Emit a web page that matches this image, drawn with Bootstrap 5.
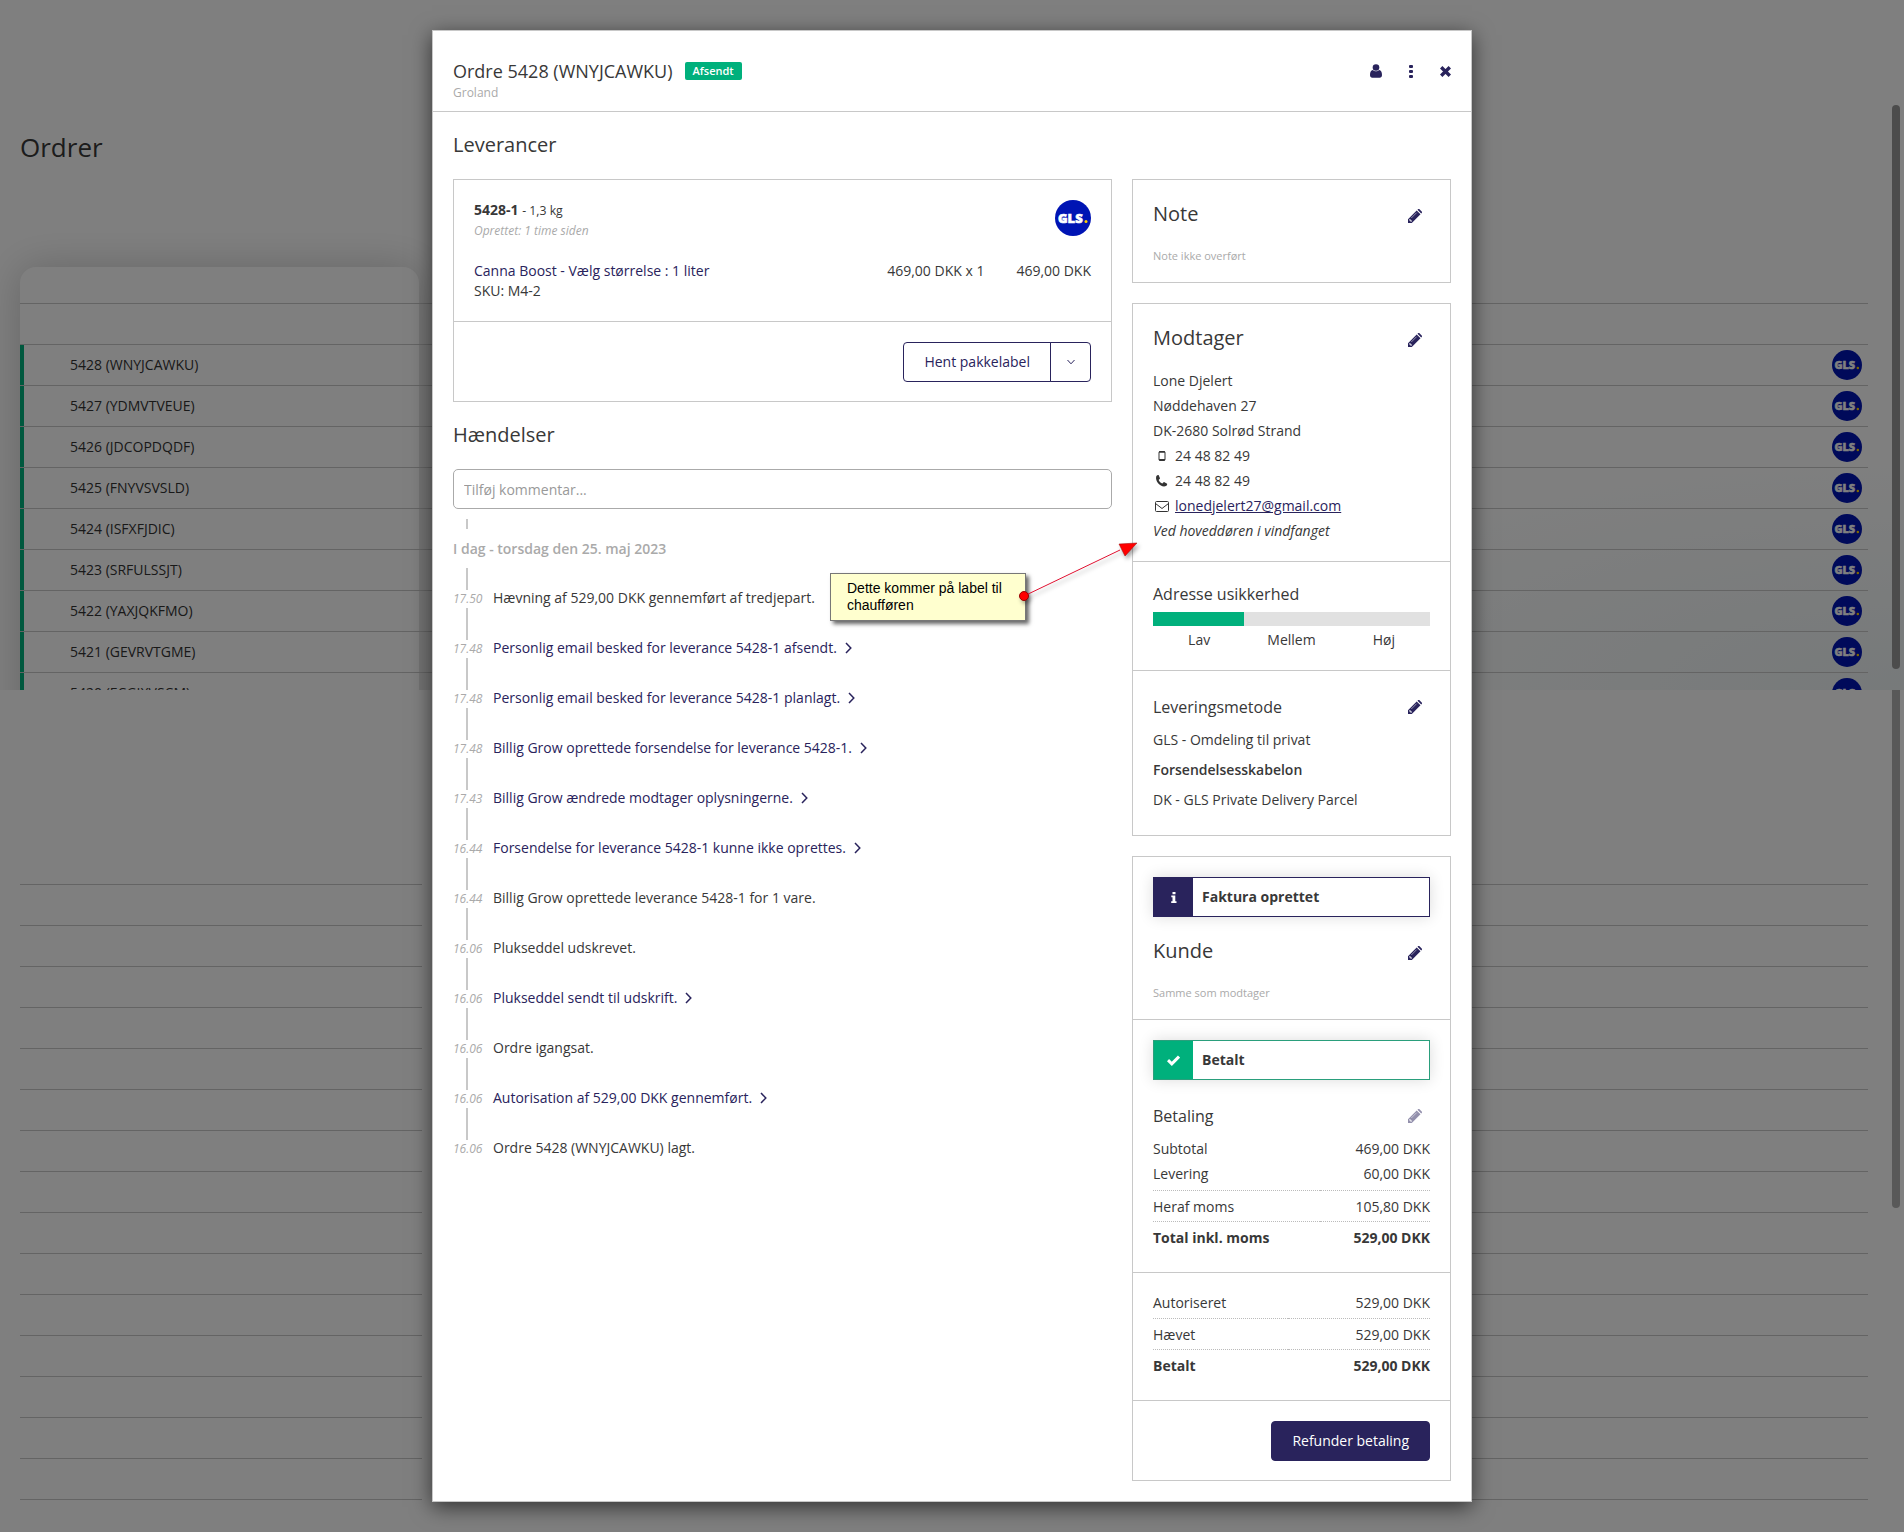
<!DOCTYPE html>
<html lang="da">
<head>
<meta charset="utf-8">
<meta name="viewport" content="width=device-width, initial-scale=1">
<title>Ordrer</title>
<link href="https://cdn.jsdelivr.net/npm/bootstrap@5.3.0/dist/css/bootstrap.min.css" rel="stylesheet">
<style>
:root{--ink:#383838;--navy:#29235c;--green:#00b07c;--line:#c8c8c8;--mute:#aaa}
body{font-family:"Open Sans",sans-serif;font-size:14px;line-height:20px;color:var(--ink);background:#fff}
h1,h2,h3{font-weight:400;margin:0;color:var(--ink)}
a{color:var(--navy)}
svg{display:block;flex:none}
.page-wrap{position:relative;min-height:1532px}
/* page behind the dialog */
.top-pane{height:690px;overflow:hidden;padding:0 36px 0 20px;background:radial-gradient(ellipse 700px 240px at 100% 100%,#eef4f5,#fff)}
.page-title{font-size:26px;line-height:40px;padding-top:127px;margin-bottom:100px}
.orders{position:relative}
.orders::before{content:"";position:absolute;left:0;top:0;width:399px;height:700px;border-radius:16px;background:#fff;box-shadow:0 0 40px rgba(0,0,0,.2)}
.orders-body{position:relative}
.blank-row{height:41px;border-bottom:1px solid #c8c8c8}
.blank-row.first{height:37px}
.order-row{height:41px;border-bottom:1px solid #c8c8c8;padding:0 6px 0 50px;box-shadow:inset 4px 0 var(--green)}
.order-row a{color:#333;font-size:14px}
.low-pane{padding:154px 36px 0 20px;gap:40px}
.low-col-a{width:402px}
.scroll-thumb{position:absolute;right:4px;width:8px;border-radius:4px;background:#999}
.thumb-a{top:105px;height:564px}
.thumb-b{top:690px;height:518px;background:#b2b2b2;border-radius:0 0 4px 4px}
.shade{position:absolute;inset:0;background:rgba(0,0,0,.5)}
/* dialog */
.order-modal{position:absolute;display:block;height:auto;min-height:100%;z-index:20;overflow:visible}
.order-modal .modal-dialog{max-width:1040px;margin:30px auto}
.order-modal .modal-content{border:1px solid #c8c8c8;border-radius:0;color:var(--ink);box-shadow:0 5px 20px rgba(0,0,0,.6)}
.dlg-head{padding:28px 18px 8px 20px;border-bottom:1px solid var(--line);min-height:81px}
.dlg-head h2{font-size:18px;line-height:24px}
.state-tag{background:var(--green);color:#fff;font-size:11px;line-height:18px;padding:0 8px;border-radius:2px;font-weight:600}
.shop{font-size:12px;line-height:20px;color:var(--mute)}
.ico-btn{background:none;border:0;padding:0;width:35px;height:24px;display:flex;align-items:center;justify-content:center;color:var(--navy)}
.side-col .ico-btn{width:30px}
.head-tools{margin-right:-10px}
.dlg-body{padding:19px 20px 20px}
.sec-title{font-size:20px;line-height:28px}
.events-title{padding:19px 0 20px}
.main-grid{gap:20px}
.side-col{width:319px;flex:none}
.box{border:1px solid var(--line)}
.box>section{padding:20px}
.box>section+section{border-top:1px solid var(--line)}
.box>.box-note{padding-bottom:16px}
.box-note .box-top{margin-bottom:18px}
.box>.box-addr{padding-bottom:18px}
.box>.box-foot{padding-bottom:19px}
.box>.box-paid{padding-top:17px}
.sub-it{font-size:12px;font-style:italic;color:var(--mute)}
.split .btn{border:1px solid var(--navy);color:var(--navy);font-size:14px;line-height:20px;padding:9px 20px;border-radius:4px}
.split .btn:last-child{padding:9px 0;width:41px;display:flex;align-items:center;justify-content:center}
.comment-in{height:40px;border:1px solid #aaa;border-radius:5px;font-size:14px;padding:0 10px;color:var(--ink)}
.comment-in::placeholder{color:#999}
.tl{padding-top:10px}
.tl::before{content:"";display:block;width:2px;height:10px;margin-left:13px;background:var(--line)}
.tl-date{font-weight:600;color:var(--mute);line-height:20px;padding:10px 0 9px}
.tl-list{margin:0;padding:0;list-style:none}
.tl-list li{display:flex;align-items:flex-end;height:50px}
.tl-list li:first-child{height:40px}
.tl-time{width:40px;height:100%;font-size:12px;line-height:18px;font-style:italic;color:var(--mute);display:flex;flex-direction:column}
.tl-time::before{content:"";flex:1;width:2px;margin-left:13px;background:var(--line)}
.tl-list a,.item-link{text-decoration:none}
.tl-list a{display:inline-flex;align-items:center;gap:8px}
.tag-ico{width:22px}
.addr{line-height:25px}
.mini{font-size:11px;line-height:20px;color:var(--mute)}
.sub-title{font-size:16px;line-height:24px}
.meter-title{margin-bottom:6px}
.meter{height:14px;border-radius:0;background:#e1e1e1}
.meter .progress-bar{background:var(--green)}
.method{line-height:30px;padding-top:6px}
.note-bar{height:40px;border:1px solid var(--navy);font-weight:700;box-shadow:0 0 15px rgba(0,0,0,.14)}
.note-bar span{width:39px;height:100%;background:var(--navy);color:#fff;display:flex;align-items:center;justify-content:center;margin-right:9px}
.note-bar.paid{border-color:#2a9f7c}
.note-bar.paid span{background:var(--green)}
.sums{width:100%;border-collapse:separate;border-spacing:0}
.sums th,.sums td{padding:0;line-height:25px;font-weight:400}
.sums td{text-align:right}
.sums .pre-dots th,.sums .pre-dots td{padding-bottom:4px}
.box-paid .sums .pre-dots th,.box-paid .sums .pre-dots td{padding-bottom:3px}
.sums .dots th,.sums .dots td{border-top:1px dotted #bbb;padding:3px 0 2px}
.sums .sum-b th,.sums .sum-b td{font-weight:700}
.refund{background:var(--navy);border-color:var(--navy);color:#fff;font-size:14px;line-height:20px;padding:9px 20px;border-radius:4px}
.refund:hover{background:#1c1844;color:#fff}
/* annotation */
.callout{position:absolute;left:397px;top:542px;width:196px;height:48px;background:#ffffcf;border:1px solid #777;box-shadow:3px 3px 4px rgba(0,0,0,.6);padding:6px 16px;font:14px/17px "Liberation Sans",Arial,sans-serif;color:#000}
.arrow{position:absolute;left:583px;top:500px;filter:drop-shadow(2px 3px 2px rgba(0,0,0,.35))}
</style>
</head>
<body>
<svg width="0" height="0" class="position-absolute">
<defs>
<symbol id="gls" viewBox="0 0 36 36"><circle cx="18" cy="18" r="18" fill="#0014b4"/><text x="3" y="23" font-family="Open Sans,sans-serif" font-weight="800" font-size="13" fill="#fff" stroke="#fff" stroke-width=".6">GLS</text><circle cx="31" cy="21.500" r="1.500" fill="#ffd100"/></symbol>
<symbol id="pen" viewBox="0 0 14 14"><path fill="currentColor" d="M0 14v-3.800L8.700 1.500l3.800 3.800L3.800 14zM9.500.7l.5-.4c.5-.4 1.100-.4 1.500 0l2.200 2.200c.4.400.4 1 0 1.500l-.5.500z"/><path fill="#fff" d="M1.200 10.700l.7-.7 2.100 2.100-.7.700H2.500v-1.200H1.200z"/><path stroke="#fff" stroke-width=".5" d="M3.300 9L8.600 3.700"/></symbol>
<symbol id="chev" viewBox="0 0 7 12"><path fill="none" stroke="currentColor" stroke-width="1.500" d="M1 1l4.800 5L1 11"/></symbol>
</defs>
</svg>
<div class="page-wrap">
<main>
<div class="top-pane">
<h1 class="page-title">Ordrer</h1>
<div class="orders"><div class="orders-body">
<div class="blank-row first"></div><div class="blank-row"></div>
<div class="order-row d-flex align-items-center justify-content-between"><a class="text-decoration-none" href="#">5428 (WNYJCAWKU)</a><svg width="30" height="30"><use href="#gls"/></svg></div>
<div class="order-row d-flex align-items-center justify-content-between"><a class="text-decoration-none" href="#">5427 (YDMVTVEUE)</a><svg width="30" height="30"><use href="#gls"/></svg></div>
<div class="order-row d-flex align-items-center justify-content-between"><a class="text-decoration-none" href="#">5426 (JDCOPDQDF)</a><svg width="30" height="30"><use href="#gls"/></svg></div>
<div class="order-row d-flex align-items-center justify-content-between"><a class="text-decoration-none" href="#">5425 (FNYVSVSLD)</a><svg width="30" height="30"><use href="#gls"/></svg></div>
<div class="order-row d-flex align-items-center justify-content-between"><a class="text-decoration-none" href="#">5424 (ISFXFJDIC)</a><svg width="30" height="30"><use href="#gls"/></svg></div>
<div class="order-row d-flex align-items-center justify-content-between"><a class="text-decoration-none" href="#">5423 (SRFULSSJT)</a><svg width="30" height="30"><use href="#gls"/></svg></div>
<div class="order-row d-flex align-items-center justify-content-between"><a class="text-decoration-none" href="#">5422 (YAXJQKFMO)</a><svg width="30" height="30"><use href="#gls"/></svg></div>
<div class="order-row d-flex align-items-center justify-content-between"><a class="text-decoration-none" href="#">5421 (GEVRVTGME)</a><svg width="30" height="30"><use href="#gls"/></svg></div>
<div class="order-row d-flex align-items-center justify-content-between"><a class="text-decoration-none" href="#">5420 (ECGIXVSCM)</a><svg width="30" height="30"><use href="#gls"/></svg></div>
</div></div>
</div>
<div class="low-pane d-flex">
<div class="low-col-a"><div class="blank-row"></div><div class="blank-row"></div><div class="blank-row"></div><div class="blank-row"></div><div class="blank-row"></div><div class="blank-row"></div><div class="blank-row"></div><div class="blank-row"></div><div class="blank-row"></div><div class="blank-row"></div><div class="blank-row"></div><div class="blank-row"></div><div class="blank-row"></div><div class="blank-row"></div><div class="blank-row"></div><div class="blank-row"></div></div>
<div class="flex-grow-1"><div class="blank-row"></div><div class="blank-row"></div><div class="blank-row"></div><div class="blank-row"></div><div class="blank-row"></div><div class="blank-row"></div><div class="blank-row"></div><div class="blank-row"></div><div class="blank-row"></div><div class="blank-row"></div><div class="blank-row"></div><div class="blank-row"></div><div class="blank-row"></div><div class="blank-row"></div><div class="blank-row"></div><div class="blank-row"></div></div>
</div>
</main>
<div class="scroll-thumb thumb-a"></div>
<div class="scroll-thumb thumb-b"></div>
<div class="shade"></div>

<div class="modal order-modal" role="dialog" aria-labelledby="dlgTitle">
<div class="modal-dialog">
<div class="modal-content">
<header class="dlg-head d-flex justify-content-between">
<div>
<div class="d-flex align-items-center gap-2"><h2 id="dlgTitle">Ordre 5428 (WNYJCAWKU)</h2><span class="state-tag ms-1">Afsendt</span></div>
<div class="shop">Groland</div>
</div>
<div class="head-tools d-flex">
<button class="ico-btn" type="button" aria-label="Kunde"><svg width="12" height="14" viewBox="0 0 12 14" fill="currentColor"><circle cx="6" cy="3.500" r="3.300"/><path d="M2.800 6C4.500 7.800 7.500 7.800 9.200 6 11 6.200 12 8 12 11c0 1.800-1 2.700-2.300 2.700H2.300C1 13.700 0 12.800 0 11 0 8 1 6.200 2.800 6z"/></svg></button>
<button class="ico-btn" type="button" aria-label="Mere"><svg width="4" height="14" viewBox="0 0 4 14" fill="currentColor"><rect y="1" width="4" height="3" rx="1"/><rect y="6" width="4" height="3" rx="1"/><rect y="11" width="4" height="3" rx="1"/></svg></button>
<button class="ico-btn" type="button" aria-label="Luk"><svg width="11" height="11" viewBox="0 0 11 11"><path stroke="currentColor" stroke-width="3.400" d="M1.200 1.200l8.600 8.600M9.800 1.200L1.200 9.800"/></svg></button>
</div>
</header>
<div class="dlg-body">
<h2 class="sec-title mb-3 pb-1">Leverancer</h2>
<div class="main-grid d-flex">
<div class="flex-grow-1">
<div class="box">
<section>
<div class="d-flex justify-content-between">
<div><div><b class="fw-bold">5428-1</b> <small class="fw-normal">- 1,3 kg</small></div><div class="sub-it">Oprettet: 1 time siden</div></div>
<svg width="36" height="36" role="img" aria-label="GLS"><use href="#gls"/></svg>
</div>
<div class="d-flex pt-3 mt-1">
<div class="flex-grow-1"><a class="item-link" href="#">Canna Boost - Vælg størrelse : 1 liter</a><div>SKU: M4-2</div></div>
<div class="me-3 pe-3">469,00 DKK x 1</div><div>469,00 DKK</div>
</div>
</section>
<section class="box-foot d-flex justify-content-end">
<div class="btn-group split"><button class="btn" type="button">Hent pakkelabel</button><button class="btn" type="button" aria-label="Flere valg"><svg width="8" height="6" viewBox="0 0 8 6"><path fill="none" stroke="currentColor" d="M.5 1L4 4.800 7.500 1"/></svg></button></div>
</section>
</div>
<h2 class="sec-title events-title"><label class="d-block" for="kommentar">Hændelser</label></h2>
<input class="form-control comment-in" id="kommentar" type="text" placeholder="Tilføj kommentar...">
<div class="tl">
<div class="tl-date">I dag - torsdag den 25. maj 2023</div>
<ul class="tl-list">
<li><span class="tl-time">17.50</span><span>Hævning af 529,00 DKK gennemført af tredjepart.</span></li>
<li><span class="tl-time">17.48</span><a href="#">Personlig email besked for leverance 5428-1 afsendt. <svg width="7" height="12"><use href="#chev"/></svg></a></li>
<li><span class="tl-time">17.48</span><a href="#">Personlig email besked for leverance 5428-1 planlagt. <svg width="7" height="12"><use href="#chev"/></svg></a></li>
<li><span class="tl-time">17.48</span><a href="#">Billig Grow oprettede forsendelse for leverance 5428-1. <svg width="7" height="12"><use href="#chev"/></svg></a></li>
<li><span class="tl-time">17.43</span><a href="#">Billig Grow ændrede modtager oplysningerne. <svg width="7" height="12"><use href="#chev"/></svg></a></li>
<li><span class="tl-time">16.44</span><a href="#">Forsendelse for leverance 5428-1 kunne ikke oprettes. <svg width="7" height="12"><use href="#chev"/></svg></a></li>
<li><span class="tl-time">16.44</span><span>Billig Grow oprettede leverance 5428-1 for 1 vare.</span></li>
<li><span class="tl-time">16.06</span><span>Plukseddel udskrevet.</span></li>
<li><span class="tl-time">16.06</span><a href="#">Plukseddel sendt til udskrift. <svg width="7" height="12"><use href="#chev"/></svg></a></li>
<li><span class="tl-time">16.06</span><span>Ordre igangsat.</span></li>
<li><span class="tl-time">16.06</span><a href="#">Autorisation af 529,00 DKK gennemført. <svg width="7" height="12"><use href="#chev"/></svg></a></li>
<li><span class="tl-time">16.06</span><span>Ordre 5428 (WNYJCAWKU) lagt.</span></li>
</ul>
</div>
</div>
<aside class="side-col d-flex flex-column main-grid">
<div class="box"><section class="box-note">
<div class="box-top d-flex justify-content-between"><h2 class="sec-title">Note</h2><button class="ico-btn mt-1" type="button" aria-label="Rediger note"><svg width="14" height="14"><use href="#pen"/></svg></button></div>
<div class="mini">Note ikke overført</div>
</section></div>
<div class="box">
<section class="box-addr">
<div class="d-flex justify-content-between mb-3"><h2 class="sec-title">Modtager</h2><button class="ico-btn mt-1" type="button" aria-label="Rediger modtager"><svg width="14" height="14"><use href="#pen"/></svg></button></div>
<div class="addr">
<div>Lone Djelert</div><div>Nøddehaven 27</div><div>DK-2680 Solrød Strand</div>
<div class="d-flex align-items-center"><span class="tag-ico"><svg width="18" height="14" viewBox="0 0 18 14"><rect x="6" y="2.500" width="6" height="9" rx="1" fill="none" stroke="#333"/><path stroke="#333" stroke-width="1.500" d="M6 3h6M6 10.800h6"/></svg></span>24 48 82 49</div>
<div class="d-flex align-items-center"><span class="tag-ico"><svg width="18" height="14" viewBox="0 0 18 14"><path fill="#333" d="M3.200 2.500C3.700 1.300 5 .8 5.600 1.100L7 4.200c0 .8-1.100 1.100-1.300 1.700.7 1.600 2.100 2.900 3.700 3.500.7-.2 1.100-1.400 1.700-1.300l3 1.600c.4.700-.4 2-1.200 2.400C8.300 14 1.900 7.800 3.200 2.500z"/></svg></span>24 48 82 49</div>
<div class="d-flex align-items-center"><span class="tag-ico"><svg width="18" height="14" viewBox="0 0 18 14"><rect x="2.500" y="2.500" width="13" height="10" rx="1" fill="none" stroke="#333"/><path fill="none" stroke="#333" d="M2.500 4.500L9 9.500l6.500-5"/></svg></span><a href="#">lonedjelert27@gmail.com</a></div>
<div class="fst-italic">Ved hoveddøren i vindfanget</div>
</div>
</section>
<section>
<h3 class="sub-title meter-title">Adresse usikkerhed</h3>
<div class="progress meter mb-1" role="progressbar" aria-label="Adresse usikkerhed" aria-valuenow="33" aria-valuemin="0" aria-valuemax="100"><div class="progress-bar" style="width:33%"></div></div>
<div class="d-flex text-center"><div class="col-4">Lav</div><div class="col-4">Mellem</div><div class="col-4">Høj</div></div>
</section>
<section>
<div class="d-flex justify-content-between"><h3 class="sub-title pt-1">Leveringsmetode</h3><button class="ico-btn mt-1" type="button" aria-label="Rediger leveringsmetode"><svg width="14" height="14"><use href="#pen"/></svg></button></div>
<div class="method"><div>GLS - Omdeling til privat</div><div class="fw-semibold">Forsendelsesskabelon</div><div>DK - GLS Private Delivery Parcel</div></div>
</section>
</div>
<div class="box">
<section class="box-note">
<div class="note-bar d-flex align-items-center mb-3"><span><svg width="6" height="11" viewBox="0 0 6 11" fill="currentColor"><path d="M1.500 0h3v2.300h-3zM.3 3.500h4v5.700h1.200V11H.2V9.200h1.300V5.300H.3z"/></svg></span>Faktura oprettet</div>
<div class="box-top d-flex justify-content-between pt-1"><h2 class="sec-title">Kunde</h2><button class="ico-btn mt-1" type="button" aria-label="Rediger kunde"><svg width="14" height="14"><use href="#pen"/></svg></button></div>
<div class="mini">Samme som modtager</div>
</section>
<section>
<div class="note-bar paid d-flex align-items-center mb-3"><span><svg width="13" height="11" viewBox="0 0 13 11"><path fill="none" stroke="currentColor" stroke-width="3" d="M1 5.200L4.800 8.800 12 1.600"/></svg></span>Betalt</div>
<div class="d-flex justify-content-between align-items-center pt-2 mb-2"><h3 class="sub-title">Betaling</h3><button class="ico-btn opacity-50" type="button" aria-label="Rediger betaling"><svg width="14" height="14"><use href="#pen"/></svg></button></div>
<table class="sums">
<tr><th scope="row">Subtotal</th><td>469,00 DKK</td></tr>
<tr class="pre-dots"><th scope="row">Levering</th><td>60,00 DKK</td></tr>
<tr class="dots"><th scope="row">Heraf moms</th><td>105,80 DKK</td></tr>
<tr class="dots sum-b"><th scope="row">Total inkl. moms</th><td>529,00 DKK</td></tr>
</table>
</section>
<section class="box-paid">
<table class="sums">
<tr class="pre-dots"><th scope="row">Autoriseret</th><td>529,00 DKK</td></tr>
<tr class="dots"><th scope="row">Hævet</th><td>529,00 DKK</td></tr>
<tr class="dots sum-b"><th scope="row">Betalt</th><td>529,00 DKK</td></tr>
</table>
</section>
<section class="box-foot d-flex justify-content-end"><button class="btn refund" type="button">Refunder betaling</button></section>
</div>
</aside>
</div>
</div>
<div class="callout">Dette kommer på label til chaufføren</div>
<svg class="arrow" width="130" height="80" viewBox="0 0 130 80"><path stroke="#e01030" d="M8 65L104 19"/><path fill="#f00" stroke="#900" stroke-width=".5" d="M121 12l-18 1 6 12z"/><circle cx="8" cy="65" r="4.500" fill="#f00" stroke="#900"/></svg>
</div>
</div>
</div>
</div>
<script src="https://cdn.jsdelivr.net/npm/bootstrap@5.3.0/dist/js/bootstrap.bundle.min.js"></script>
</body>
</html>
